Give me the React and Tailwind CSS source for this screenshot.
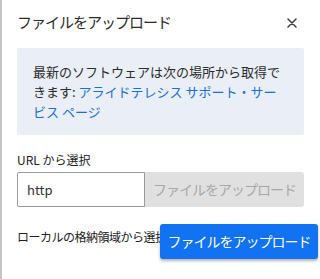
import React from 'react';

const jp = { fontFamily: '"Noto Sans CJK JP", "Noto Sans", sans-serif' };

export default function App() {
  return (
    <div className="w-[320px] h-[279px] bg-white border-l-2 border-[#c4c4c4] overflow-hidden" style={jp}>
      <div className="pl-[15px] pr-[16px]">
        {/* Header */}
        <div className="flex items-center justify-between h-[44px] pt-[1px]">
          <h2 className="text-[15px] text-[#2b2b2b] tracking-[-1px]">ファイルをアップロード</h2>
          <button className="w-[20px] h-[20px] flex items-center justify-center mr-[2px] text-[#444]">
            <svg width="10" height="10" viewBox="0 0 10 10">
              <path d="M1 1L9 9M9 1L1 9" stroke="currentColor" strokeWidth="1.6" strokeLinecap="round" />
            </svg>
          </button>
        </div>

        {/* Info box */}
        <div className="mt-[4px] bg-[#e9eef7] rounded-[2px] h-[87px] pl-[16px] pr-[21px] pt-[14px] text-[13px] leading-[20px] text-[#2b2b2b]">
          最新のソフトウェアは次の場所から取得できます:{' '}
          <a className="text-[#1a6fd6]" href="#">アライドテレシス サポート・サービス ページ</a>
        </div>

        {/* URL */}
        <div className="mt-[17px] text-[12px] leading-[16px] text-[#222]">URL から選択</div>
        <div className="mt-[4px] flex h-[35px]">
          <input
            readOnly
            value="http"
            className="w-[128px] h-full border border-[#9a9a9a] rounded-l-[2px] px-[9px] text-[13px] text-[#333] outline-none"
          />
          <button
            disabled
            className="flex-1 h-full bg-[#e0e0e0] rounded-r-[3px] text-[14px] text-[#a8a8a8] tracking-[-1px]"
          >
            ファイルをアップロード
          </button>
        </div>

        {/* Local */}
        <div className="mt-[17px] flex items-start">
          <span className="w-[143px] shrink-0 mt-[5px] text-[12px] leading-[16px] text-[#222] whitespace-nowrap tracking-[-0.5px]">
            ローカルの格納領域から選択
          </span>
          <button className="shrink-0 w-[158px] h-[35px] bg-[#1172f2] rounded-[3px] text-white text-[14px] tracking-[-1px] whitespace-nowrap shadow-[0_2px_3px_rgba(0,0,0,0.3)]">
            ファイルをアップロード
          </button>
        </div>
      </div>
    </div>
  );
}
